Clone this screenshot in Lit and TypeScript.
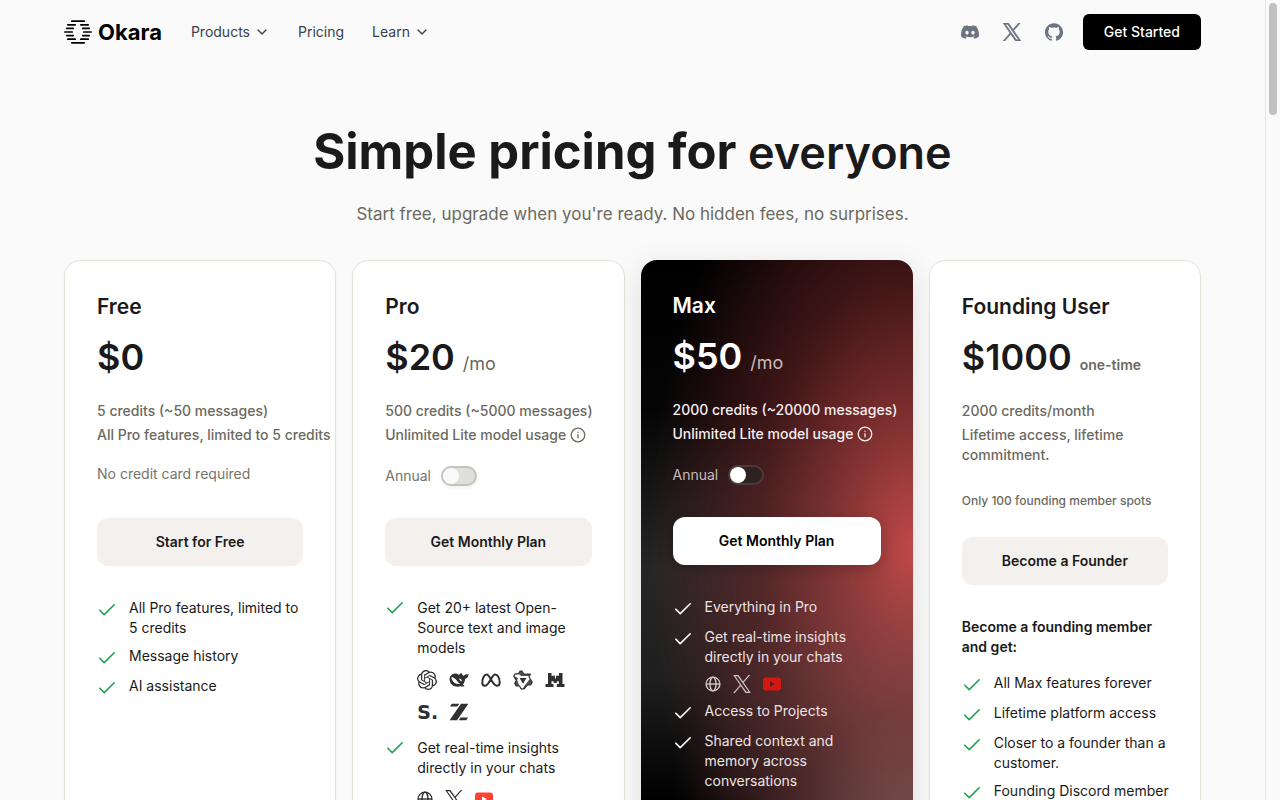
import { LitElement, html, css, svg, nothing } from "lit";
import { customElement, property } from "lit/decorators.js";

const X_PATH =
  "M714.163 519.284L1160.89 0H1055.03L667.137 450.887L357.328 0H0L468.492 681.821L0 1226.37H105.866L515.491 750.218L842.672 1226.37H1200L714.137 519.284H714.163ZM569.165 687.828L521.697 619.934L144.011 79.6944H306.615L611.412 515.685L658.88 583.579L1055.08 1150.3H892.476L569.165 687.854V687.828Z";

const icons: Record<string, unknown> = {
  chevron: html`<svg width="16" height="16" viewBox="0 0 24 24" fill="none" stroke="currentColor" stroke-width="2" stroke-linecap="round" stroke-linejoin="round" aria-hidden="true"><path d="m6 9 6 6 6-6" /></svg>`,
  check: html`<svg width="20" height="20" viewBox="0 0 20 20" fill="none" stroke="currentColor" stroke-width="1.6" stroke-linecap="round" stroke-linejoin="round" aria-hidden="true"><path d="M2.8 10.2 7.2 14.6 17.2 4.8" /></svg>`,
  info: html`<svg width="16" height="16" viewBox="0 0 16 16" fill="none" stroke="currentColor" stroke-width="1.3" stroke-linecap="round" aria-hidden="true"><circle cx="8" cy="8" r="6.8" /><path d="M8 7.6v3.2M8 5.2v.1" /></svg>`,
  x: html`<svg width="18" height="18" viewBox="0 0 1200 1227" fill="currentColor" stroke="currentColor" aria-hidden="true"><path d=${X_PATH} /></svg>`,
  globe: html`<svg width="16" height="16" viewBox="0 0 16 16" fill="none" stroke="currentColor" stroke-width="1.4" aria-hidden="true"><circle cx="8" cy="8" r="6.9" /><ellipse cx="8" cy="8" rx="3" ry="6.9" /><path d="M1.1 8h13.8" /></svg>`,
  youtube: html`<svg width="18" height="18" viewBox="0 0 18 18" aria-hidden="true"><rect y="2.6" width="18" height="13" rx="3" fill="var(--yt, #ff4236)" /><path d="M7 6.4v5.4l5-2.7z" fill="var(--yt-play, #fff)" /></svg>`,
  discord: html`<svg width="18" height="18" viewBox="0 0 24 24" fill="currentColor" aria-hidden="true"><path d="M20.317 4.3698a19.7913 19.7913 0 00-4.8851-1.5152.0741.0741 0 00-.0785.0371c-.211.3753-.4447.8648-.6083 1.2495-1.8447-.2762-3.68-.2762-5.4868 0-.1636-.3933-.4058-.8742-.6177-1.2495a.077.077 0 00-.0785-.037 19.7363 19.7363 0 00-4.8852 1.515.0699.0699 0 00-.0321.0277C.5334 9.0458-.319 13.5799.0992 18.0578a.0824.0824 0 00.0312.0561c2.0528 1.5076 4.0413 2.4228 5.9929 3.0294a.0777.0777 0 00.0842-.0276c.4616-.6304.8731-1.2952 1.226-1.9942a.076.076 0 00-.0416-.1057c-.6528-.2476-1.2743-.5495-1.8722-.8923a.077.077 0 01-.0076-.1277c.1258-.0943.2517-.1923.3718-.2914a.0743.0743 0 01.0776-.0105c3.9278 1.7933 8.18 1.7933 12.0614 0a.0739.0739 0 01.0785.0095c.1202.099.246.1981.3728.2924a.077.077 0 01-.0066.1276 12.2986 12.2986 0 01-1.873.8914.0766.0766 0 00-.0407.1067c.3604.698.7719 1.3628 1.225 1.9932a.076.076 0 00.0842.0286c1.961-.6067 3.9495-1.5219 6.0023-3.0294a.077.077 0 00.0313-.0552c.5004-5.177-.8382-9.6739-3.5485-13.6604a.061.061 0 00-.0312-.0286zM8.02 15.3312c-1.1825 0-2.1569-1.0857-2.1569-2.419 0-1.3332.9555-2.4189 2.157-2.4189 1.2108 0 2.1757 1.0952 2.1568 2.419 0 1.3332-.9555 2.4189-2.1569 2.4189zm7.9748 0c-1.1825 0-2.1569-1.0857-2.1569-2.419 0-1.3332.9554-2.4189 2.1569-2.4189 1.2108 0 2.1757 1.0952 2.1568 2.419 0 1.3332-.946 2.4189-2.1568 2.4189Z" /></svg>`,
  github: html`<svg width="18" height="18" viewBox="0 0 24 24" fill="currentColor" aria-hidden="true"><path d="M12 .297c-6.63 0-12 5.373-12 12 0 5.303 3.438 9.8 8.205 11.385.6.113.82-.258.82-.577 0-.285-.01-1.04-.015-2.04-3.338.724-4.042-1.61-4.042-1.61C4.422 18.07 3.633 17.7 3.633 17.7c-1.087-.744.084-.729.084-.729 1.205.084 1.838 1.236 1.838 1.236 1.07 1.835 2.809 1.305 3.495.998.108-.776.417-1.305.76-1.605-2.665-.3-5.466-1.332-5.466-5.93 0-1.31.465-2.38 1.235-3.22-.135-.303-.54-1.523.105-3.176 0 0 1.005-.322 3.3 1.23.96-.267 1.98-.399 3-.405 1.02.006 2.04.138 3 .405 2.28-1.552 3.285-1.23 3.285-1.23.645 1.653.24 2.873.12 3.176.765.84 1.23 1.91 1.23 3.22 0 4.61-2.805 5.625-5.475 5.92.42.36.81 1.096.81 2.22 0 1.606-.015 2.896-.015 3.286 0 .315.21.69.825.57C20.565 22.092 24 17.592 24 12.297c0-6.627-5.373-12-12-12" /></svg>`,
  openai: html`<svg width="20" height="20" viewBox="0 0 24 24" fill="currentColor" aria-hidden="true"><path d="M22.2819 9.8211a5.9847 5.9847 0 0 0-.5157-4.9108 6.0462 6.0462 0 0 0-6.5098-2.9A6.0651 6.0651 0 0 0 4.9807 4.1818a5.9847 5.9847 0 0 0-3.9977 2.9 6.0462 6.0462 0 0 0 .7427 7.0966 5.98 5.98 0 0 0 .511 4.9107 6.051 6.051 0 0 0 6.5146 2.9001A5.9847 5.9847 0 0 0 13.2599 24a6.0557 6.0557 0 0 0 5.7718-4.2058 5.9894 5.9894 0 0 0 3.9977-2.9001 6.0557 6.0557 0 0 0-.7475-7.0729zm-9.022 12.6081a4.4755 4.4755 0 0 1-2.8764-1.0408l.1419-.0804 4.7783-2.7582a.7948.7948 0 0 0 .3927-.6813v-6.7369l2.02 1.1686a.071.071 0 0 1 .038.052v5.5826a4.504 4.504 0 0 1-4.4945 4.4944zm-9.6607-4.1254a4.4708 4.4708 0 0 1-.5346-3.0137l.142.0852 4.783 2.7582a.7712.7712 0 0 0 .7806 0l5.8428-3.3685v2.3324a.0804.0804 0 0 1-.0332.0615L9.74 19.9502a4.4992 4.4992 0 0 1-6.1408-1.6464zM2.3408 7.8956a4.485 4.485 0 0 1 2.3655-1.9728V11.6a.7664.7664 0 0 0 .3879.6765l5.8144 3.3543-2.0201 1.1685a.0757.0757 0 0 1-.071 0l-4.8303-2.7865A4.504 4.504 0 0 1 2.3408 7.872zm16.5963 3.8558L13.1038 8.364 15.1192 7.2a.0757.0757 0 0 1 .071 0l4.8303 2.7913a4.4944 4.4944 0 0 1-.6765 8.1042v-5.6772a.79.79 0 0 0-.407-.667zm2.0107-3.0231l-.142-.0852-4.7735-2.7818a.7759.7759 0 0 0-.7854 0L9.409 9.2297V6.8974a.0662.0662 0 0 1 .0284-.0615l4.8303-2.7866a4.4992 4.4992 0 0 1 6.6802 4.66zM8.3065 12.863l-2.02-1.1638a.0804.0804 0 0 1-.038-.0567V6.0742a4.4992 4.4992 0 0 1 7.3757-3.4537l-.142.0805L8.704 5.459a.7948.7948 0 0 0-.3927.6813zm1.0976-2.3654l2.602-1.4998 2.6069 1.4998v2.9994l-2.5974 1.4997-2.6067-1.4997Z" /></svg>`,
  deepseek: html`<svg width="20" height="20" viewBox="0 0 20 20" fill="currentColor" aria-hidden="true"><path fill-rule="evenodd" d="M.6 9.2C.6 5.600 3.200 4.100 6 3.600c1.600-.3 2.900.5 4.100 1.400.5-1.200 1.400-2 2.600-2 .1 1.200.7 2.100 1.900 2.700.8-1 2.700-1.700 5-1.500-.2 2.400-1.300 4.100-3.500 4.800-.2 2.600-1 4.400-2.400 5.700.6.5 1.600.7 2 1.300-1.500.7-3 .6-4.200.2-4.900 1.500-10.900-.9-10.900-7Zm1.900-2.100c1.400 0 3 .9 4.400 2.400 1.500 1.600 2.600 3.600 4.400 4.300-3.800 1.300-8.900-1.700-8.800-6.700Zm7.600 1.500c1.500.2 2.700 1.200 2.900 2.700-1.300.2-2.600-1.100-2.900-2.700Z" /></svg>`,
  meta: html`<svg width="20" height="20" viewBox="0 0 20 20" fill="none" stroke="currentColor" stroke-width="2" stroke-linejoin="round" aria-hidden="true"><path d="M1.300 12.700C1.300 8.400 3.200 4.400 5.600 4.400c3.800 0 5.400 11.300 10.300 11.300 1.900 0 2.800-1.200 2.800-3.200 0-4.200-2-8.100-4.500-8.100-3.700 0-5.900 11.300-10.300 11.300-1.700 0-2.600-1-2.600-3Z" /></svg>`,
  qwen: html`<svg width="20" height="20" viewBox="0 0 20 20" aria-hidden="true"><path d="M9 1.200 10.900 4.200H17.400L16 6.800 19.200 12.300 17.700 14.800H14.500L11.100 18.800H8L6.500 16H3.200L1.800 13.400 3.400 10.600.8 6.100 2.200 3.800H5.600L7 1.200Z" fill="none" stroke="currentColor" stroke-width="1.200" stroke-linejoin="round" /><path d="M7 1.200 5.600 3.800 8 6H16.400L17.400 4.200H10.900L9 1.200ZM.8 6.100 3.400 10.600 1.800 13.400 3.200 16H6.500L4.200 10.200 5 8ZM19.200 12.300 17 8.800 11.100 16.200 10 18.800H11.100L14.500 14.800H17.700Z" fill="currentColor" fill-opacity=".85" /><path d="M6.600 8H13.400L10 13.800Z" fill="currentColor" /></svg>`,
  mistral: html`<svg width="20" height="20" viewBox="0 0 20 20" fill="currentColor" aria-hidden="true"><path d="M3 3h3.500v2.800H10v2.600h1V5.800h3V3h3.500v11H19.500v3H11.800v-3h2v-2.800h-2V13H8.700v-1.800H6.500V14h2v3H.5v-3H3Z" /></svg>`,
  zai: html`<svg width="20" height="20" viewBox="0 0 20 20" fill="currentColor" aria-hidden="true"><path d="M2.800 1.800h7.500L8.400 4.400H1ZM12 1.800h7.400L8 18.200H.600ZM11.600 15.600H19L17.200 18.200H9.700Z" /></svg>`,
  stealth: html`<span class="wordmark">S.</span>`,
};

interface Feature {
  text: string;
  logos?: string[];
}

interface Plan {
  name: string;
  price: string;
  unit?: string;
  strongUnit?: boolean;
  credits: string;
  extra: string;
  info?: boolean;
  note?: string;
  smallNote?: boolean;
  cta: string;
  heading?: string;
  featured?: boolean;
  features: Feature[];
}

const plans: Plan[] = [
  {
    name: "Free",
    price: "$0",
    credits: "5 credits (~50 messages)",
    extra: "All Pro features, limited to 5 credits",
    note: "No credit card required",
    cta: "Start for Free",
    features: [
      { text: "All Pro features, limited to 5 credits" },
      { text: "Message history" },
      { text: "AI assistance" },
    ],
  },
  {
    name: "Pro",
    price: "$20",
    unit: "/mo",
    credits: "500 credits (~5000 messages)",
    extra: "Unlimited Lite model usage",
    info: true,
    cta: "Get Monthly Plan",
    features: [
      {
        text: "Get 20+ latest Open-Source text and image models",
        logos: ["openai", "deepseek", "meta", "qwen", "mistral", "stealth", "zai"],
      },
      { text: "Get real-time insights directly in your chats", logos: ["globe", "x", "youtube"] },
    ],
  },
  {
    name: "Max",
    price: "$50",
    unit: "/mo",
    credits: "2000 credits (~20000 messages)",
    extra: "Unlimited Lite model usage",
    info: true,
    cta: "Get Monthly Plan",
    featured: true,
    features: [
      { text: "Everything in Pro" },
      { text: "Get real-time insights directly in your chats", logos: ["globe", "x", "youtube"] },
      { text: "Access to Projects" },
      { text: "Shared context and memory across conversations" },
    ],
  },
  {
    name: "Founding User",
    price: "$1000",
    unit: "one-time",
    strongUnit: true,
    credits: "2000 credits/month",
    extra: "Lifetime access, lifetime commitment.",
    note: "Only 100 founding member spots",
    smallNote: true,
    cta: "Become a Founder",
    heading: "Become a founding member and get:",
    features: [
      { text: "All Max features forever" },
      { text: "Lifetime platform access" },
      { text: "Closer to a founder than a customer." },
      { text: "Founding Discord member" },
    ],
  },
];

@customElement("plan-card")
export class PlanCard extends LitElement {
  @property({ attribute: false }) plan!: Plan;

  static styles = css`
    :host { display: block; min-width: 0; }
    * { box-sizing: border-box; }
    .card {
      height: 100%;
      padding: 32px;
      border: 1px solid #e4e3da;
      border-radius: 16px;
      background: #fff;
      color: #1a1a1a;
      box-shadow: 0 1px 3px rgba(0, 0, 0, 0.04);
      font-size: 14px;
      line-height: 20px;
    }
    .card.featured {
      --yt: #d3190f;
      --yt-play: #5b1a1c;
      border: 0;
      color: #fff;
      background:
        radial-gradient(ellipse 250px 300px at 100% 600px, rgba(150, 110, 110, 0.75), rgba(120, 90, 90, 0.3) 50%, rgba(100, 80, 80, 0) 100%),
        radial-gradient(ellipse 265px 480px at 100% 290px, #c04848 0%, rgba(176, 64, 64, 0.78) 22%, rgba(130, 42, 45, 0.48) 58%, rgba(90, 25, 30, 0) 100%),
        linear-gradient(180deg, #000 0, #050505 150px, #262626 310px, #1e1e1e 420px, #000 540px);
      box-shadow: 0 8px 32px rgba(0, 0, 0, 0.12);
    }
    h2 { margin: 0; font-size: 21px; line-height: 28px; font-weight: 600; }
    .price { display: flex; align-items: baseline; gap: 8px; margin: 16px 0 24px; height: 40px; }
    .amount { font-size: 36px; line-height: 40px; font-weight: 600; }
    .unit { font-size: 18px; color: #6b6960; }
    .unit.strong { font-size: 14px; font-weight: 600; }
    .line { margin: 0 0 4px; font-weight: 500; color: #6b6960; }
    .wide { white-space: nowrap; }
    .extra { margin: 0; }
    .line svg { vertical-align: -3px; }
    .note { display: flex; gap: 10px; align-items: center; height: 30px; margin: 16px 0 27px; color: #75736a; }
    .note.plain { align-items: flex-start; padding-top: 3px; }
    .note.small { align-items: flex-end; height: 32px; margin-bottom: 24px; font-size: 12px; line-height: 24px; font-weight: 500; color: #6b6960; }
    .switch {
      appearance: none;
      display: flex;
      align-items: center;
      width: 36px;
      height: 20px;
      margin: 0;
      border: 2px solid #c4c3be;
      border-radius: 10px;
      background: #dfdfdb;
      box-shadow: 0 2px 4px rgba(0, 0, 0, 0.06);
    }
    .switch::before { content: ""; width: 16px; height: 16px; border-radius: 50%; background: #fafafa; }
    .cta {
      display: block;
      width: 100%;
      height: 48px;
      border: 0;
      border-radius: 12px;
      background: #f4f0ed;
      color: #1a1a1a;
      font: 600 14px/20px var(--sans);
      box-shadow: 0 0 1px rgba(0, 0, 0, 0.08);
    }
    h3 { margin: 32px 0 -16px; font-size: 14px; line-height: 20px; font-weight: 600; }
    ul { display: grid; gap: 8px; margin: 32px -4px 0 0; padding: 0; list-style: none; }
    li { display: flex; gap: 12px; min-height: 22px; }
    .tick { flex: none; height: 20px; margin-top: 2px; color: #1fa251; }
    .logos { display: flex; flex-wrap: wrap; align-items: center; gap: 12px; margin-top: 12px; padding-bottom: 8px; color: #303030; }
    .logos svg, .tick svg { display: block; }
    .wordmark { width: 20px; height: 20px; font: 700 19px/20px "DejaVu Sans", sans-serif; }
    li.rich .tick { margin-top: 0; }
    .featured h2, .featured .amount { color: #fff; }
    .featured .unit { color: #c9bcbc; }
    .featured .line { color: #f5eeee; }
    .featured .note { color: #c4bcbc; }
    .featured .switch { border-color: #4d3a38; background: #2e2220; box-shadow: none; }
    .featured .switch::before { background: #fff; }
    .featured .cta { background: #fff; color: #000; box-shadow: 0 4px 14px rgba(0, 0, 0, 0.2); }
    .featured ul { color: #ece4e4; }
    .featured .tick { color: #fff; }
    .featured li.rich .tick { margin-top: 2px; }
    .featured .logos { height: 18px; margin-top: 8px; padding: 0; color: #cfc6c6; }
  `;

  render() {
    const p = this.plan;
    return html`
      <article class="card ${p.featured ? "featured" : ""}">
        <h2>${p.name}</h2>
        <div class="price">
          <span class="amount">${p.price}</span>
          ${p.unit ? html`<span class="unit ${p.strongUnit ? "strong" : ""}">${p.unit}</span>` : nothing}
        </div>
        <p class="line wide">${p.credits}</p>
        <p class="line extra ${p.smallNote ? "" : "wide"}">${p.extra} ${p.info ? icons.info : nothing}</p>
        ${p.note
          ? html`<div class="note ${p.smallNote ? "small" : "plain"}">${p.note}</div>`
          : html`<label class="note">Annual <input class="switch" type="checkbox" role="switch" /></label>`}
        <button class="cta">${p.cta}</button>
        ${p.heading ? html`<h3>${p.heading}</h3>` : nothing}
        <ul>
          ${p.features.map(
            (f) => html`<li class=${f.logos ? "rich" : ""}>
              <span class="tick">${icons.check}</span>
              <div>
                ${f.text}
                ${f.logos ? html`<div class="logos">${f.logos.map((n) => icons[n])}</div>` : nothing}
              </div>
            </li>`
          )}
        </ul>
      </article>
    `;
  }
}

const logoRows = [
  [[7, 21]], [[3, 12], [16, 25]], [[2, 10], [18, 26]], [[0, 9], [19, 28]],
  [[2, 10], [18, 26]], [[3, 12], [16, 25]], [[7, 21]],
];

@customElement("app-root")
export class AppRoot extends LitElement {
  static styles = css`
    :host {
      --sans: Inter, "Liberation Sans", sans-serif;
      display: flex;
      height: 100vh;
      overflow: hidden;
      background: #fafafa;
      color: #1a1a1a;
      font-family: var(--sans);
    }
    * { box-sizing: border-box; }
    .page { flex: 1; min-width: 0; padding: 0 64px; }
    header { display: flex; align-items: center; height: 64px; }
    .brand { display: flex; align-items: center; gap: 6px; color: #000; text-decoration: none; font: 700 22px/28px var(--sans); }
    nav { display: flex; gap: 28px; margin-left: 29px; }
    .link { display: flex; align-items: center; gap: 4px; padding: 0; border: 0; background: none; color: #374151; font: 400 14px/20px var(--sans); text-decoration: none; }
    .social { display: flex; align-items: center; gap: 22px; margin-left: auto; }
    .social a { display: grid; place-items: center; width: 20px; height: 20px; color: #6b7280; }
    .social a[aria-label="X"] { stroke-width: 50; }
    .start { height: 36px; margin-left: 19px; padding: 0 21px; border: 0; border-radius: 6px; background: #000; color: #fff; font: 500 14px/20px var(--sans); }
    .hero { padding: 56px 0 32px; text-align: center; }
    h1 { margin: 0; font-size: 49px; line-height: 64px; font-weight: 700; }
    h1 span { font-size: 45px; line-height: 48px; font-weight: 600; }
    .sub { margin: 16px 0 0; font-size: 17px; line-height: 28px; color: #6b6960; }
    .plans { display: grid; grid-template-columns: repeat(4, minmax(0, 1fr)); gap: 16px; }
    .rail { flex: none; width: 15px; border-left: 1px solid #e8e8e8; padding: 3px; }
    .thumb { width: 8px; height: 112px; border-radius: 4px; background: #c1c1c1; }
  `;

  render() {
    return html`
      <div class="page">
        <header>
          <a class="brand" href="#">
            <svg width="28" height="24" viewBox="0 0 28 24" stroke="currentColor" stroke-width="1.7" stroke-linecap="round" aria-hidden="true">
              ${logoRows.map((row, i) => row.map(([a, b]) => svg`<path d="M${a + 0.8} ${1.2 + i * 3.6}H${b - 0.8}" />`))}
            </svg>
            Okara
          </a>
          <nav>
            <button class="link">Products ${icons.chevron}</button>
            <a class="link" href="#">Pricing</a>
            <button class="link">Learn ${icons.chevron}</button>
          </nav>
          <div class="social">
            <a href="#" aria-label="Discord">${icons.discord}</a>
            <a href="#" aria-label="X">${icons.x}</a>
            <a href="#" aria-label="GitHub">${icons.github}</a>
          </div>
          <button class="start">Get Started</button>
        </header>
        <section class="hero">
          <h1>Simple pricing for <span>everyone</span></h1>
          <p class="sub">Start free, upgrade when you're ready. No hidden fees, no surprises.</p>
        </section>
        <main class="plans">${plans.map((p) => html`<plan-card .plan=${p}></plan-card>`)}</main>
      </div>
      <div class="rail"><div class="thumb"></div></div>
    `;
  }
}
